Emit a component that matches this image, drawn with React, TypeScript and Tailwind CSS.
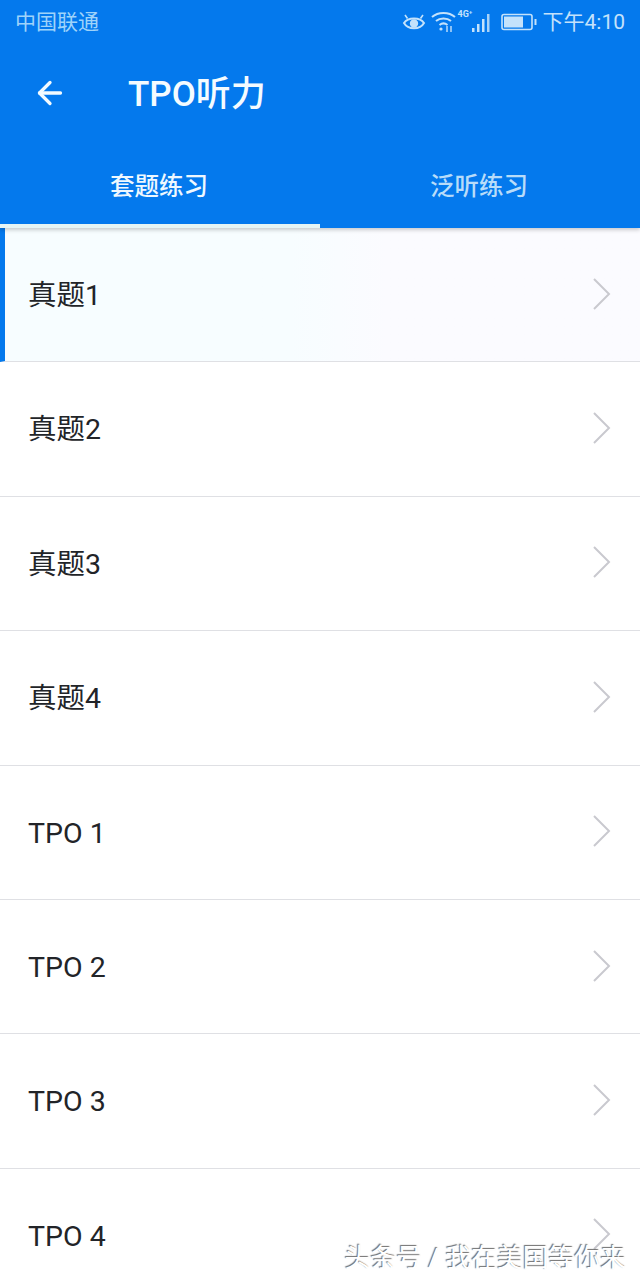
import React from 'react';
import { ArrowLeft } from 'lucide-react';

const font = "font-['Roboto','Noto_Sans_CJK_SC',sans-serif]";

const rows = ['真题1', '真题2', '真题3', '真题4', 'TPO 1', 'TPO 2', 'TPO 3', 'TPO 4'];

const Chevron = () => (
  <svg width="20" height="34" viewBox="0 0 20 34" fill="none" className="shrink-0 mr-[-1px] mt-[-2px]">
    <path d="M2 2 L17 17 L2 32" stroke="#c9c9cf" strokeWidth="2" />
  </svg>
);

// status bar icons, drawn by hand
const StatusIcons = () => (
  <div className="flex items-center">
    <svg width="24" height="22" viewBox="0 0 24 22" fill="none" stroke="#c4e2fb" strokeWidth="2" className="mr-[5px] ml-[-2px]">
      <path d="M2 12 C6 6 18 6 22 12 C18 19 6 19 2 12 Z" />
      <circle cx="12" cy="12.5" r="3.2" fill="#c4e2fb" />
      <path d="M3 4 L5.5 7.5 M21 4 L18.5 7.5" strokeWidth="1.6" />
    </svg>
    <svg width="25" height="22" viewBox="0 0 25 22" fill="none" stroke="#c4e2fb" strokeWidth="2" className="mr-[2px]">
      <path d="M1 6 C7 0.5 18 0.5 24 6" />
      <path d="M5 10 C9 6.5 16 6.5 20 10" />
      <path d="M8.5 14 C11 12 14 12 16.5 14" />
      <circle cx="10" cy="18" r="1.6" fill="#c4e2fb" stroke="none" />
      <path d="M16 15 V21 M20 15 V21" strokeWidth="1.4" />
    </svg>
    <div className="relative w-[36px] h-[22px]">
      <span className="absolute left-0 top-[-2px] text-[9px] leading-[10px] font-bold text-[#c4e2fb]">4G⁺</span>
      <svg width="36" height="22" viewBox="0 0 36 22" className="absolute left-0 top-0">
        <rect x="14" y="17" width="2.5" height="4" fill="#c4e2fb" />
        <rect x="19" y="13" width="2.5" height="8" fill="#c4e2fb" />
        <rect x="24" y="8" width="2.5" height="13" fill="#c4e2fb" />
        <rect x="29" y="3" width="2.5" height="18" fill="#a9d2f7" />
      </svg>
    </div>
    <svg width="36" height="18" viewBox="0 0 36 18" fill="none" className="ml-[7px] mr-[6px]">
      <rect x="1" y="1.5" width="30" height="15" rx="2" stroke="#c4e2fb" strokeWidth="1.6" />
      <rect x="3" y="3.5" width="19" height="11" fill="#c4e2fb" />
      <rect x="33.5" y="6" width="2" height="6" fill="#c4e2fb" />
    </svg>
    <span className="text-[21px] leading-none text-[#c4e2fb]">下午4:10</span>
  </div>
);

export default function App() {
  return (
    <div className={`relative w-[640px] h-[1280px] overflow-hidden bg-white ${font}`}>
      {/* Header */}
      <div className="relative z-10 h-[228px] bg-[#0479ed] shadow-[0_2px_4px_rgba(0,0,0,0.2)]">
        <div className="h-[44px] pl-[15px] pr-[15px] flex items-center justify-between">
          <span className="text-[21px] leading-none text-[#9fd3fa]">中国联通</span>
          <StatusIcons />
        </div>
        <div className="h-[100px] flex items-center pl-[32px]">
          <ArrowLeft size={36} color="#f2faff" strokeWidth={2.2} className="mt-[-2px]" />
          <span className="ml-[60px] text-[35px] leading-none font-medium text-[#f4fbff]">TPO听力</span>
        </div>
        <div className="h-[84px] flex">
          <div className="w-1/2 flex flex-col">
            <div className="flex-1 flex items-center justify-center text-[24.5px] font-medium text-[#eef8ff] pt-[6px] pr-[2px]">套题练习</div>
            <div className="h-[4px] bg-[#e6f5f5]" />
          </div>
          <div className="w-1/2 flex flex-col">
            <div className="flex-1 flex items-center justify-center text-[24.5px] font-medium text-[#b8dcf9] pt-[6px] pr-[2px]">泛听练习</div>
            <div className="h-[4px]" />
          </div>
        </div>
      </div>

      {/* List */}
      {rows.map((label, i) => (
        <div
          key={label}
          className={`flex items-center h-[134.4px] pr-[29px] border-b border-[#dfe0e4] ${
            i === 0 ? 'border-l-[5px] border-l-[#0479ed] pl-[23px] bg-gradient-to-r from-[#f7fdff] from-45% to-[#fbfbff] to-60%' : 'pl-[28px]'
          }`}
        >
          <span className="flex-1 text-[28.5px] leading-none text-[#222428] pt-[3px]">{label}</span>
          <Chevron />
        </div>
      ))}

      {/* Watermark */}
      <div className="absolute right-[14px] top-[1246px] text-[25.8px] leading-none whitespace-nowrap text-white [text-shadow:-1px_-1px_1px_rgba(60,60,60,0.75)]">
        头条号 / 我在美国等你来
      </div>
    </div>
  );
}
